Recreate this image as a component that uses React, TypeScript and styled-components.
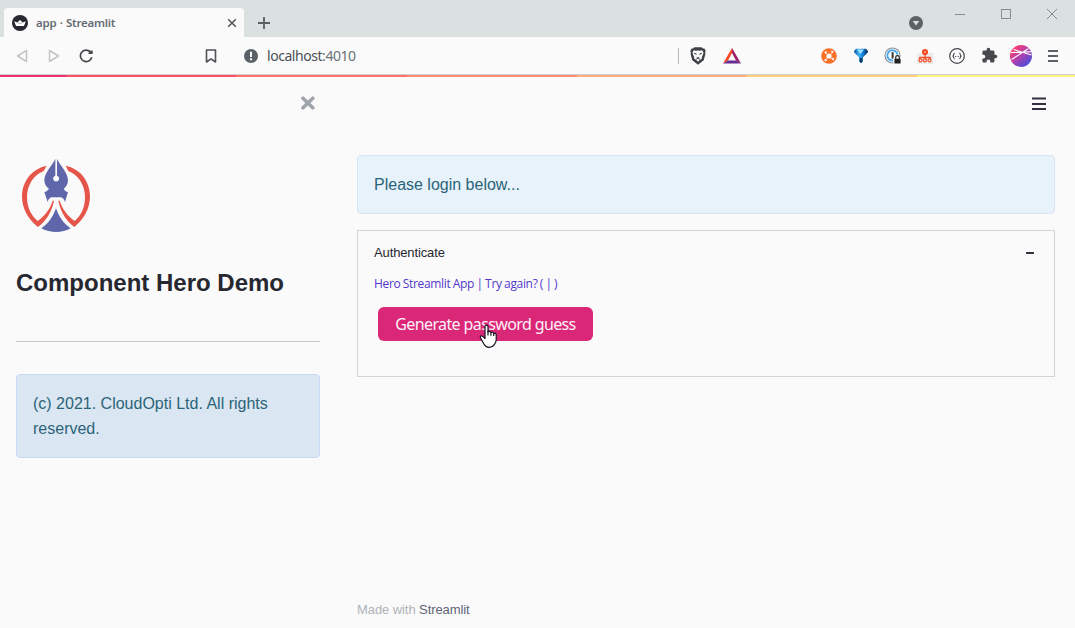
import React from 'react';
import styled, { createGlobalStyle } from 'styled-components';

const GlobalStyle = createGlobalStyle`
  * { box-sizing: border-box; }
  html, body { margin: 0; padding: 0; background: #fafafa; overflow: hidden; }
  svg { display: block; }
`;

const ui = `"Noto Sans", "Open Sans", sans-serif`;
const arial = `"Liberation Sans", Arial, sans-serif`;

const Window = styled.div`
  width: 1075px;
  height: 628px;
  display: flex;
  flex-direction: column;
  background: #fafafa;
  font-family: ${arial};
`;

const TabStrip = styled.header`
  height: 37px;
  flex: none;
  display: flex;
  align-items: flex-start;
  background: #dbe1e1;
`;

const Tab = styled.div`
  width: 240px;
  height: 29px;
  margin: 8px 0 0 4px;
  padding: 0 7px 0 8px;
  display: flex;
  align-items: center;
  background: #fafafa;
  border-radius: 4px 4px 0 0;
`;

const TabTitle = styled.span`
  flex: 1;
  margin-left: 8px;
  font: 600 11.5px/16px ${ui};
  letter-spacing: -0.25px;
  word-spacing: 0.6px;
  color: #666c74;
`;

const NewTab = styled.div`
  margin: 17px 0 0 14px;
`;

const WindowControls = styled.div`
  margin-left: auto;
  display: flex;
  align-items: flex-start;
`;

const SearchTabs = styled.div`
  padding-top: 16px;
  margin-right: 14px;
`;

const WindowButton = styled.div`
  width: 46px;
  height: 28px;
  display: flex;
  align-items: center;
  justify-content: center;
`;

const Toolbar = styled.nav`
  height: 38px;
  flex: none;
  display: flex;
  align-items: center;
  border-bottom: 1px solid #cfd1d6;
`;

const NavButton = styled.div<{ $w?: number }>`
  width: ${(p) => p.$w ?? 32}px;
  height: 37px;
  display: flex;
  flex: none;
  align-items: center;
  justify-content: center;
`;

const NavGroup = styled.div`
  display: flex;
  margin-left: 6px;
  width: 189px;
`;

const Address = styled.div`
  display: flex;
  align-items: center;
  margin-left: 17px;
  gap: 9px;
  flex: 1;
`;

const Url = styled.span`
  font: 400 14px/20px ${ui};
  letter-spacing: -0.45px;
  color: #6d7278;
  b { font-weight: 400; color: #4b4f56; }
`;

const Shields = styled.div`
  display: flex;
  align-items: center;
  height: 37px;
`;

const Divider = styled.div`
  width: 1px;
  height: 16px;
  background: #b4b6b9;
`;

const Extensions = styled.div`
  display: flex;
  margin: 0 6px 0 66px;
`;

const Rainbow = styled.div`
  height: 2px;
  flex: none;
  background: linear-gradient(
    90deg,
    #f2306e 66px,
    #fb5068 66px 236px,
    #ff7069 236px 407px,
    #ff8e70 407px 577px,
    #ffad78 577px 746px,
    #ffce79 746px 917px,
    #fff27e 917px
  );
`;

const Page = styled.div`
  flex: 1;
  display: flex;
  min-height: 0;
`;

const Sidebar = styled.aside`
  width: 336px;
  padding: 19px 16px 0;
  display: flex;
  flex-direction: column;
`;

const CloseRow = styled.div`
  display: flex;
  justify-content: flex-end;
  padding-right: 4px;
  height: 54px;
`;

const Heading = styled.h1`
  margin: 29px 0 0;
  font: 700 24px/28px ${arial};
  color: #262730;
  white-space: nowrap;
`;

const Rule = styled.hr`
  width: 100%;
  height: 1px;
  margin: 44px 0 32px;
  border: 0;
  background: #c9c9cc;
`;

const Alert = styled.div<{ $tone: 'main' | 'side' }>`
  padding: 16px;
  border: 1px solid ${(p) => (p.$tone === 'main' ? '#dae5f3' : '#c8dbf4')};
  border-radius: 4px;
  background: ${(p) => (p.$tone === 'main' ? '#e7f2fa' : '#dbe6f3')};
  color: #2a6478;
  font: 400 16px/25px ${arial};
`;

const Main = styled.main`
  flex: 1;
  padding: 0 20px 0 21px;
  display: flex;
  flex-direction: column;
`;

const MenuRow = styled.div`
  display: flex;
  justify-content: flex-end;
  padding: 20px 9px 0 0;
  height: 78px;
`;

const LoginAlert = styled(Alert)`
  height: 59px;
`;

const Expander = styled.section`
  height: 147px;
  margin-top: 16px;
  padding: 13px 20px 0 16px;
  border: 1px solid #d3d4d7;
`;

const ExpanderHead = styled.div`
  display: flex;
  align-items: center;
  justify-content: space-between;
  font: 400 13px/18px ${arial};
  letter-spacing: -0.12px;
  color: #262730;
`;

const Links = styled.div`
  margin-top: 13px;
  font: 400 12px/17px "Open Sans", ${ui};
  letter-spacing: -0.33px;
  word-spacing: -0.4px;
  color: #5238cc;
  white-space: pre;
`;

const Generate = styled.button`
  position: relative;
  display: block;
  width: 215px;
  height: 34px;
  margin: 15px 0 0 4px;
  padding: 0;
  border: 0;
  border-radius: 6px;
  background: #db2777;
  color: #fdf2f8;
  font: 400 16px/34px ${ui};
  letter-spacing: -0.62px;
  white-space: nowrap;
`;

const Pointer = styled.svg`
  position: absolute;
  left: 101px;
  top: 17px;
`;

const Footer = styled.footer`
  margin-top: auto;
  padding-bottom: 9px;
  font: 400 13px/18px ${arial};
  letter-spacing: -0.08px;
  color: #b0b3b9;
  span { color: #5f6478; }
`;

const Crown = () => (
  <svg width="16" height="16" viewBox="0 0 16 16">
    <circle cx="8" cy="8" r="8" fill="#262730" />
    <path d="M2.200 6.300 5.200 7.600 8 5l2.800 2.600 3-1.300-1.800 4.700H4z" fill="#fff" />
    <path d="m5.200 7.600 2.800 1 2.800-1" stroke="#888b95" strokeWidth=".6" fill="none" />
  </svg>
);

const Lion = () => (
  <svg width="16" height="18" viewBox="0 0 16 18">
    <path d="M4.400.3h7.200l1.300 1.300h1.500l1.300 2.500-.6 1.500.3 1.300-1.700 6.400L8 17.800l-5.700-4.500L.6 6.900l.3-1.300-.6-1.500 1.300-2.500h1.500z" fill="#3e4048" />
    <path d="m3.800 3.200 2.400.6L8 3.400l1.800.4 2.400-.6 1.300 2.300-.8 2.700-.9 1.800.2 1.500-2 1.300L8 14.700l-2-1.900-2-1.300.2-1.500-.9-1.800-.8-2.700z" fill="#fafafa" />
    <path d="m4 6.200 2.300.7-.4 1M12 6.200l-2.300.7.4 1M6.800 10.200 8 10.900l1.200-.7M6 12.200l2-.8 2 .8" stroke="#3e4048" strokeWidth=".9" fill="none" />
  </svg>
);

const Bat = () => (
  <svg width="18" height="16" viewBox="0 0 18 16">
    <path d="M9 0 0 15.500 5 12.500 9 5z" fill="#ff4724" />
    <path d="m9 0 9 15.500-5-3L9 5z" fill="#9e1f63" />
    <path d="M0 15.500h18l-5-3H5z" fill="#662d91" />
  </svg>
);

const Lifebuoy = () => (
  <svg width="16" height="16" viewBox="0 0 16 16">
    <circle cx="8" cy="8" r="7.800" fill="#f9702b" />
    <circle cx="8" cy="8" r="2.600" fill="#fff" />
    <path d="M4 5.300 5.300 3.600M10.300 3.300l2 1M12.600 10l-1 2M5.600 12.700l-2-1.200" stroke="#fff" strokeWidth="1.700" />
    <path d="m6.500 6.500-1.500-1.500M9.500 6.500 11 5M9.500 9.500 11 11M6.500 9.500 5 11" stroke="#fff" strokeWidth=".8" />
  </svg>
);

const Gem = () => (
  <svg width="14" height="15" viewBox="0 0 14 15">
    <defs>
      <linearGradient id="gem" x1="0" x2="1">
        <stop offset="0" stopColor="#0a4c9c" /><stop offset=".35" stopColor="#3db4f5" /><stop offset=".65" stopColor="#117bd5" /><stop offset="1" stopColor="#07294f" />
      </linearGradient>
    </defs>
    <path d="M2 .7h10l1.900 2.200v1.400L8.800 9.600v4.200L7 15l-1.800-1.200V9.600L.1 4.300V2.900z" fill="url(#gem)" />
    <path d="M5.600 9.400 7 10.200l1.500-.8v4.400L7 15l-1.400-1.200z" fill="#123963" />
    <path d="M3 1.500 6.500 6 10 1.500z" fill="#9de4ff" />
  </svg>
);

const Password = () => (
  <svg width="18" height="18" viewBox="0 0 18 18">
    <circle cx="8.500" cy="8.500" r="7.500" fill="#fff" stroke="#8c9299" strokeWidth="1.200" />
    <path d="M9 13.500a5.100 5.100 0 1 1 4.500-5" fill="none" stroke="#4fa9e8" strokeWidth="2" />
    <rect x="7.600" y="5.200" width="2" height="6.400" fill="#34383e" />
    <path d="M9.500 11.200h1.200V10a2.600 2.600 0 0 1 5.200 0v1.200h1.300V17H9.500z" fill="#fafafa" />
    <rect x="10.400" y="11.800" width="6.200" height="4.800" rx=".7" fill="#222" />
    <path d="M11.700 12v-1.500a1.800 1.800 0 0 1 3.600 0V12" fill="none" stroke="#222" strokeWidth="1.200" />
  </svg>
);

const Sitemap = () => (
  <svg width="16" height="16" viewBox="0 0 16 16">
    <path d="M0 5h16v11H0z" fill="#eceaea" />
    <path d="M8 6v6M2.800 12V9.500h10.400V12" fill="none" stroke="#f04d29" strokeWidth="1.300" />
    <circle cx="8" cy="4" r="3.100" fill="#f04d29" />
    <path d="m6.900 2.900 2.200 2.200m0-2.200L6.900 5.100" stroke="#ff9d80" strokeWidth=".7" />
    <g fill="#fff" stroke="#f04d29" strokeWidth="1.300">
      <circle cx="3.500" cy="12.400" r="1.500" /><circle cx="8" cy="12.400" r="1.500" /><circle cx="12.500" cy="12.400" r="1.500" />
    </g>
  </svg>
);

const Braces = () => (
  <svg width="16" height="16" viewBox="0 0 17 17" fill="none" stroke="#44474c">
    <circle cx="8.500" cy="8.500" r="7.800" strokeWidth="1.300" />
    <path d="M6 5.500c-1.300 0-.7 2.200-1.700 3 1 .8.400 3 1.700 3M11 5.500c1.300 0 .7 2.200 1.700 3-1 .8-.4 3-1.700 3" strokeWidth="1.200" />
    <path d="M6.500 9h1.200m1.600 0h1.200" strokeWidth="1" />
  </svg>
);

const Puzzle = () => (
  <svg width="17" height="17" viewBox="0 0 24 24">
    <path fill="#47494d" d="M20.500 11H19V7a2 2 0 0 0-2-2h-4V3.500a2.500 2.500 0 0 0-5 0V5H4a2 2 0 0 0-2 2v3.800h1.500a2.700 2.700 0 0 1 0 5.400H2V20a2 2 0 0 0 2 2h3.800v-1.500a2.700 2.700 0 0 1 5.400 0V22H17a2 2 0 0 0 2-2v-4h1.500a2.500 2.500 0 0 0 0-5z" />
  </svg>
);

const Avatar = () => (
  <svg width="22" height="22" viewBox="0 0 22 22">
    <defs>
      <linearGradient id="avatar" x1=".15" y1=".1" x2=".85" y2=".9">
        <stop offset="0" stopColor="#ff3d69" /><stop offset=".45" stopColor="#b840ac" /><stop offset="1" stopColor="#464ed8" />
      </linearGradient>
      <clipPath id="round"><circle cx="11" cy="11" r="11" /></clipPath>
    </defs>
    <g clipPath="url(#round)">
      <rect width="22" height="22" fill="url(#avatar)" />
      <path d="M1.500 14.500 18.500 3.500M3.500 4.500 21.500 10M1 7.500 21 6.800" stroke="#fff" strokeWidth="1.100" fill="none" />
    </g>
  </svg>
);

const Logo = () => (
  <svg width="84" height="90" viewBox="18 0 252 270">
    <g fill="#e5554a">
      <path d="M110 47C66 56 36 94 36 139c0 38 19 70 48 92 23-18 41-43 48-79h-4c-8 25-23 45-45 61C64 197 51 173 51 142c0-37 20-67 50-79z" />
      <path d="M167 47c44 9 73 47 73 92 0 38-19 70-47 92-23-18-41-43-48-79h4c8 25 23 45 45 61 19-16 31-40 31-71 0-37-20-67-50-79z" />
    </g>
    <g fill="#6066aa">
      <path d="M136 26v51a9 9 0 1 0 5 0V26c8 19 33 41 33 65 0 12-6 20-13 25 3 6 7 9 13 10l-9 30c-3-8-6-12-12-14h-29c-6 2-9 6-11 14l-10-30c6-1 10-5 14-10-8-5-14-13-14-25 0-24 25-46 33-65z" />
      <path d="M138 175c9 25 22 45 44 60-27 15-60 15-88 0 22-15 35-35 44-60z" />
    </g>
  </svg>
);

export default function App() {
  return (
    <Window>
      <GlobalStyle />
      <TabStrip>
        <Tab>
          <Crown />
          <TabTitle>app · Streamlit</TabTitle>
          <svg width="10" height="10" viewBox="0 0 10 10"><path d="m1.200 1.200 7.600 7.600m0-7.600L1.200 8.800" stroke="#55595e" strokeWidth="1.600" /></svg>
        </Tab>
        <NewTab>
          <svg width="12" height="12" viewBox="0 0 12 12"><path d="M6 0v12M0 6h12" stroke="#5b5f63" strokeWidth="1.800" /></svg>
        </NewTab>
        <WindowControls>
          <SearchTabs>
            <svg width="14" height="14" viewBox="0 0 14 14"><circle cx="7" cy="7" r="7" fill="#5f6264" /><path d="M3.800 5h6.400L7 9.500z" fill="#dbe1e1" /></svg>
          </SearchTabs>
          <WindowButton><svg width="10" height="10"><path d="M0 5.500h10" stroke="#888c8d" /></svg></WindowButton>
          <WindowButton><svg width="10" height="10"><rect x=".5" y=".5" width="9" height="9" fill="none" stroke="#888c8d" /></svg></WindowButton>
          <WindowButton><svg width="10" height="10"><path d="m0 0 10 10M10 0 0 10" stroke="#888c8d" /></svg></WindowButton>
        </WindowControls>
      </TabStrip>

      <Toolbar>
        <NavGroup>
          <NavButton><svg width="12" height="14" viewBox="0 0 12 14"><path d="M10.500 1.500v11L1.500 7z" fill="none" stroke="#c3c4c6" strokeWidth="1.500" strokeLinejoin="round" /></svg></NavButton>
          <NavButton><svg width="12" height="14" viewBox="0 0 12 14"><path d="M1.500 1.500v11l9-5.500z" fill="none" stroke="#c3c4c6" strokeWidth="1.500" strokeLinejoin="round" /></svg></NavButton>
          <NavButton>
            <svg width="14" height="14" viewBox="0 0 14 14"><path d="M11.300 3A5.700 5.700 0 1 0 12.700 8.200" fill="none" stroke="#45484c" strokeWidth="1.700" /><path d="M8.800 4.900h4.700V.9z" fill="#45484c" /><circle cx="11.700" cy="3.300" r="1.800" fill="#45484c" /></svg>
          </NavButton>
        </NavGroup>
        <NavButton>
          <svg width="12" height="14" viewBox="0 0 12 14"><path d="M1.500 1h9v12L6 9.800 1.500 13z" fill="none" stroke="#505358" strokeWidth="1.600" strokeLinejoin="round" /></svg>
        </NavButton>
        <Address>
          <svg width="14" height="14" viewBox="0 0 14 14"><circle cx="7" cy="7" r="7" fill="#5a6068" /><path d="M6 2.800h2V8H6zM6 9.300h2v2H6z" fill="#fafafa" /></svg>
          <Url><b>localhost</b>:4010</Url>
        </Address>
        <Shields>
          <Divider />
          <NavButton $w={37}><Lion /></NavButton>
          <NavButton $w={31}><Bat /></NavButton>
        </Shields>
        <Extensions>
          <NavButton><Lifebuoy /></NavButton>
          <NavButton><Gem /></NavButton>
          <NavButton><Password /></NavButton>
          <NavButton><Sitemap /></NavButton>
          <NavButton><Braces /></NavButton>
          <NavButton><Puzzle /></NavButton>
          <NavButton><Avatar /></NavButton>
          <NavButton><svg width="10" height="12" viewBox="0 0 10 12"><path d="M0 1h10M0 6h10M0 11h10" stroke="#5c5f63" strokeWidth="2" /></svg></NavButton>
        </Extensions>
      </Toolbar>
      <Rainbow />

      <Page>
        <Sidebar>
          <CloseRow>
            <svg width="16" height="14" viewBox="0 0 16 14"><path d="m3 2.200 9.800 9.600m0-9.600L3 11.800" stroke="#a0a4ad" strokeWidth="3.600" strokeLinecap="round" /></svg>
          </CloseRow>
          <Logo />
          <Heading>Component Hero Demo</Heading>
          <Rule />
          <Alert $tone="side">(c) 2021. CloudOpti Ltd. All rights reserved.</Alert>
        </Sidebar>
        <Main>
          <MenuRow>
            <svg width="14" height="14" viewBox="0 0 14 14"><path d="M0 1.500h14M0 7h14M0 12h14" stroke="#30313c" strokeWidth="1.900" /></svg>
          </MenuRow>
          <LoginAlert $tone="main">Please login below...</LoginAlert>
          <Expander>
            <ExpanderHead>
              Authenticate
              <svg width="8" height="2"><rect width="8" height="2" rx=".5" fill="#30313c" /></svg>
            </ExpanderHead>
            <Links>Hero Streamlit App | Try again? ( | )</Links>
            <Generate>
              Generate password guess
              <Pointer width="19" height="25" viewBox="0 0 19 25">
                <path d="M6 2.500C6 .6 9 .6 9 2.500V8c.5-1 2.900-.8 2.900.7.700-.9 2.800-.6 2.800.8.800-.7 2.500-.2 2.500 1.300V16c0 2-1 3.300-1.700 4.300-.8 1.500-1.700 3-5.400 3-3.200 0-4.300-1.600-5.200-3.300l-3.400-6.200c-.9-1.700 1-2.700 2.200-1.400L6 14.600z" fill="#fff" stroke="#171522" strokeWidth="1.200" strokeLinejoin="round" />
                <path d="M9 7v4.500M11.900 8.500v3.200M14.700 9.400V12" stroke="#171522" strokeWidth="1.200" />
              </Pointer>
            </Generate>
          </Expander>
          <Footer>Made with <span>Streamlit</span></Footer>
        </Main>
      </Page>
    </Window>
  );
}
